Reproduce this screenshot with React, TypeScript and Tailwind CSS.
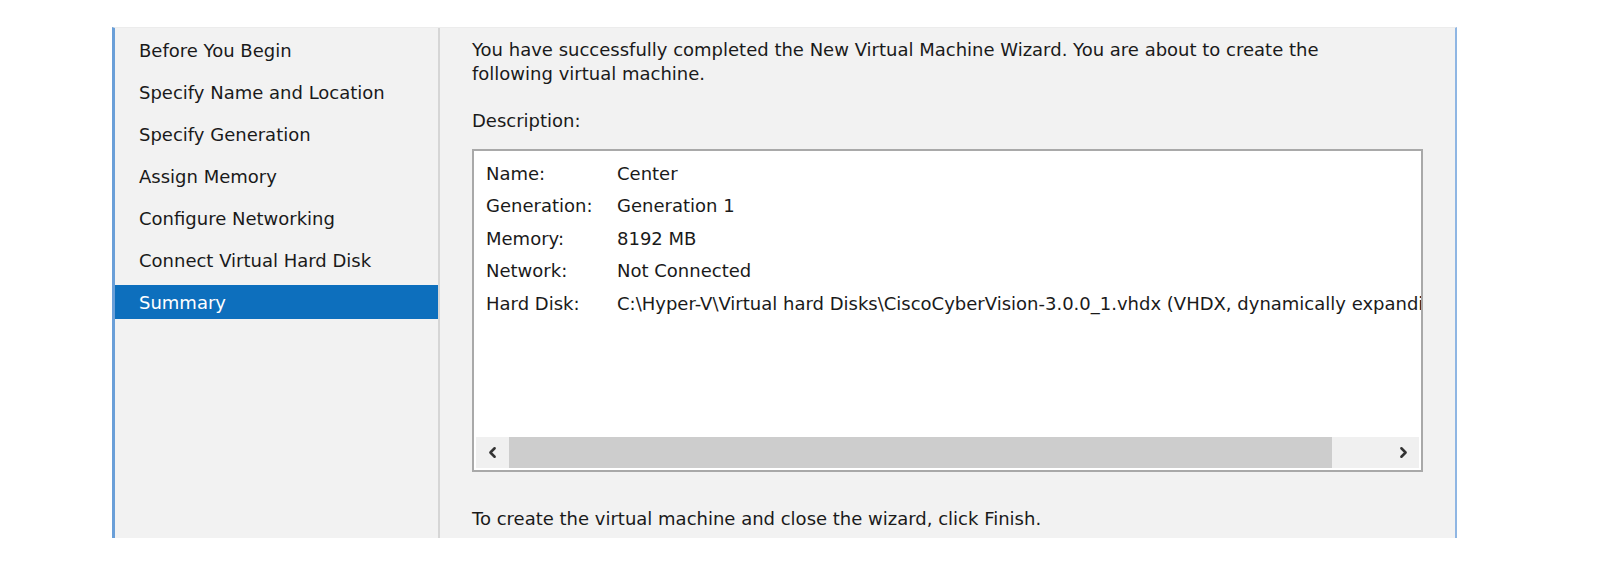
import { ChevronLeft, ChevronRight } from "lucide-react";

const steps = [
  "Before You Begin",
  "Specify Name and Location",
  "Specify Generation",
  "Assign Memory",
  "Configure Networking",
  "Connect Virtual Hard Disk",
  "Summary",
];

const details: [string, string][] = [
  ["Name:", "Center"],
  ["Generation:", "Generation 1"],
  ["Memory:", "8192 MB"],
  ["Network:", "Not Connected"],
  ["Hard Disk:", "C:\\Hyper-V\\Virtual hard Disks\\CiscoCyberVision-3.0.0_1.vhdx (VHDX, dynamically expanding)"],
];

export default function App() {
  return (
    <div className="h-[579px] w-full overflow-hidden bg-white pt-[27px] pl-[112px] font-['DejaVu_Sans',Verdana,sans-serif] text-[18px] text-[#1a1a1a]">
      <div className="flex h-[511px] w-[1345px] border-l-[3px] border-r-2 border-t border-l-[#6a9fd8] border-r-[#8fb6e3] border-t-[#ececec] bg-[#f2f2f2]">
        {/* step list */}
        <nav className="w-[325px] shrink-0 border-r-2 border-[#d6d6d6] pt-[5px]">
          {steps.map((s) => (
            <div
              key={s}
              className={
                s === "Summary"
                  ? "flex h-[34px] items-center bg-[#0d6fbd] pl-[24px] text-white mt-[4px]"
                  : "flex h-[34px] items-center pl-[24px] mb-[8px]"
              }
            >
              {s}
            </div>
          ))}
        </nav>

        {/* summary */}
        <main className="flex min-w-0 flex-1 flex-col pl-[32px] pr-[31px] pt-[10px]">
          <p className="w-[890px] leading-[24px]">
            You have successfully completed the New Virtual Machine Wizard. You are about to create the following virtual machine.
          </p>
          <p className="mt-[23px] leading-[24px]">Description:</p>

          <div className="mt-[16px] flex h-[323px] w-[951px] flex-col border-2 border-[#a9a9a9] bg-white">
            <div className="flex-1 overflow-hidden pl-[12px] pt-[6px]">
              {details.map(([k, v]) => (
                <div key={k} className="flex h-[32.5px] items-center whitespace-nowrap">
                  <span className="w-[131px] shrink-0">{k}</span>
                  <span>{v}</span>
                </div>
              ))}
            </div>
            <div className="mx-[2px] mb-[2px] flex h-[31px] items-center bg-[#f0f0f0]">
              <div className="flex w-[33px] justify-center text-[#333]">
                <ChevronLeft size={17} strokeWidth={3.5} />
              </div>
              <div className="h-full w-[823px] bg-[#cdcdcd]" />
              <div className="flex flex-1 justify-end pr-[7px] text-[#333]">
                <ChevronRight size={17} strokeWidth={3.5} />
              </div>
            </div>
          </div>

          <p className="mt-[35px] leading-[24px]">To create the virtual machine and close the wizard, click Finish.</p>
        </main>
      </div>
    </div>
  );
}
